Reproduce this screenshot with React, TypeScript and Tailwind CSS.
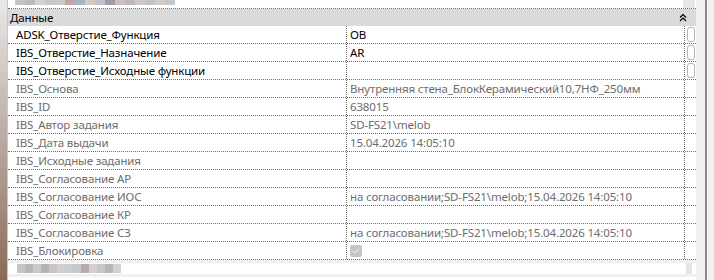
import React from "react";

const rows: { name: string; value: string; dark?: boolean; btn?: boolean; check?: boolean }[] = [
  { name: "ADSK_Отверстие_Функция", value: "OB", dark: true, btn: true },
  { name: "IBS_Отверстие_Назначение", value: "AR", dark: true, btn: true },
  { name: "IBS_Отверстие_Исходные функции", value: "", dark: true, btn: true },
  { name: "IBS_Основа", value: "Внутренняя стена_БлокКерамический10,7НФ_250мм" },
  { name: "IBS_ID", value: "638015" },
  { name: "IBS_Автор задания", value: "SD-FS21\\melob" },
  { name: "IBS_Дата выдачи", value: "15.04.2026 14:05:10" },
  { name: "IBS_Исходные задания", value: "" },
  { name: "IBS_Согласование АР", value: "" },
  { name: "IBS_Согласование ИОС", value: "на согласовании;SD-FS21\\melob;15.04.2026 14:05:10" },
  { name: "IBS_Согласование КР", value: "" },
  { name: "IBS_Согласование СЗ", value: "на согласовании;SD-FS21\\melob;15.04.2026 14:05:10" },
  { name: "IBS_Блокировка", value: "", check: true },
];

const blurTop = ["#c9c3c6", "#bdb8bc", "#d6d2cf", "#c6c9cc", "#cfc9c4", "#b9a9ad", "#a7b5c2", "#d0cbc5", "#c4c0c7", "#a899a6", "#c8bfc2", "#bfb5bd", "#cdc8cc", "#bcc5ca", "#d2cbc6", "#c1c8cd"];
const blurBottom = ["#c6c3c7", "#b8b6bb", "#cbc8cb", "#b4b2b8", "#c9c5c4", "#d6cdcf", "#c7cdd2", "#c6c9cc", "#b7a9b4", "#d1cfd2", "#c9c4c6", "#b7b4b8", "#d3d0d2"];

function Chevrons() {
  return (
    <svg width="8" height="9" viewBox="0 0 8 9" className="block">
      <path d="M1 4.5 L4 1.5 L7 4.5" fill="none" stroke="#000" strokeWidth="1.2" />
      <path d="M1 8 L4 5 L7 8" fill="none" stroke="#000" strokeWidth="1.2" />
    </svg>
  );
}

export default function App() {
  return (
    <div
      className="flex h-[280px] w-[714px] overflow-hidden bg-white text-[11.5px] tracking-[-0.15px]"
      style={{ fontFamily: '"Noto Sans", "Liberation Sans", sans-serif' }}
    >
      <div className="w-[8px] shrink-0 bg-gradient-to-b from-[#e9e9e9] via-[#b9aaa2] to-[#8a6a56] border-r border-[#c8c8c8]" />
      <div className="flex w-[688px] shrink-0 flex-col">
        <div className="flex h-[9px] shrink-0 items-start border-b border-dotted border-[#6e6e6e]">
          <div className="ml-[7px] flex h-[5px]">
            {blurTop.map((c, i) => (
              <div key={i} className="h-[5px] w-[10px]" style={{ background: c }} />
            ))}
          </div>
          <div className="ml-auto mr-[1px] h-[8px] w-[12px] bg-[#e6e6e6]" />
        </div>
        <div className="flex h-[17px] shrink-0 items-center bg-[#dadada] pl-[2px] pr-[9px] text-black">
          <span className="leading-none">Данные</span>
          <span className="ml-auto">
            <Chevrons />
          </span>
        </div>
        {rows.map((r, i) => (
          <div key={i} className="flex h-[18px] shrink-0 border-b border-dotted border-[#6e6e6e]">
            <div
              className={`flex w-[339px] shrink-0 items-center overflow-hidden whitespace-nowrap border-r border-dotted border-[#6e6e6e] pl-[8px] ${
                r.dark ? "text-black" : "text-[#6d6d6d]"
              }`}
            >
              {r.name}
            </div>
            <div
              className={`flex w-[338px] shrink-0 items-center overflow-hidden whitespace-nowrap border-r border-dotted border-[#6e6e6e] pl-[3px] ${
                r.dark ? "text-black" : "text-[#6d6d6d]"
              }`}
            >
              {r.check ? (
                <div className="flex h-[12px] w-[12px] items-center justify-center rounded-[2px] bg-[#c6c6c6]">
                  <svg width="8" height="6" viewBox="0 0 8 6">
                    <path d="M1 3 L3 5 L7 1" fill="none" stroke="#eeeeee" strokeWidth="1" />
                  </svg>
                </div>
              ) : (
                r.value
              )}
            </div>
            <div className="flex w-[11px] shrink-0 items-center justify-center">
              {r.btn && <div className="h-[15px] w-[8px] rounded-[3px] border border-[#b4b4b4] bg-white" />}
            </div>
          </div>
        ))}
        <div className="flex flex-1 flex-col bg-white">
          <div className="h-[3px] bg-[#f0f0f0]" />
          <div className="flex h-[11px] items-center pl-[9px]">
            {blurBottom.map((c, i) => (
              <div key={i} className="h-[9px] w-[8px]" style={{ background: c }} />
            ))}
            <div className="ml-auto mr-[4px] h-[11px] w-[6px] bg-[#e4e4e4]" />
          </div>
          <div className="h-[3px] bg-[#f0f0f0]" />
        </div>
      </div>
      <div className="w-[9px] shrink-0 bg-[#f0f0f0]" />
      <div className="w-[2px] shrink-0 bg-[#8a8a8a]" />
      <div className="flex-1 bg-[#f0f0f0]" />
    </div>
  );
}
